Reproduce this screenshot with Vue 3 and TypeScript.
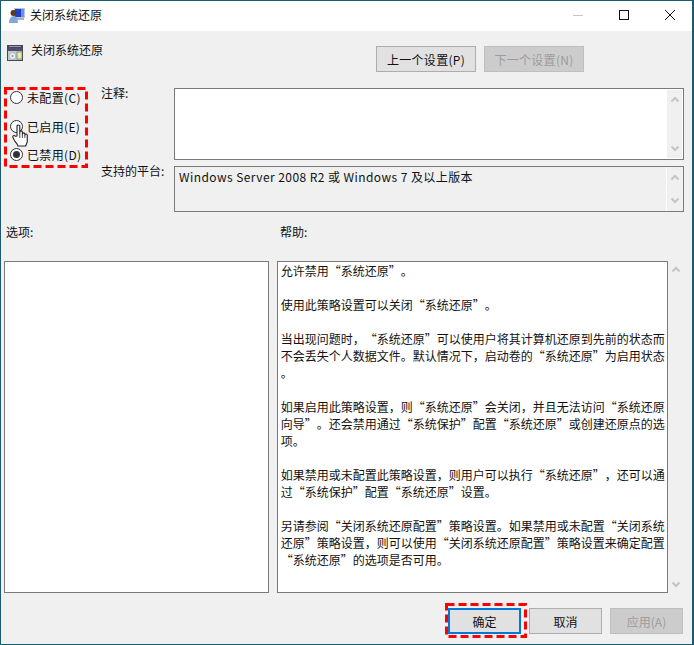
<script setup lang="ts">
const radios = [
  { label: '未配置(C)', checked: false },
  { label: '已启用(E)', checked: false },
  { label: '已禁用(D)', checked: true },
]
const helpLines = [
  '允许禁用“系统还原”。',
  '',
  '使用此策略设置可以关闭“系统还原”。',
  '',
  '当出现问题时，“系统还原”可以使用户将其计算机还原到先前的状态而',
  '不会丢失个人数据文件。默认情况下，启动卷的“系统还原”为启用状态',
  '。',
  '',
  '如果启用此策略设置，则“系统还原”会关闭，并且无法访问“系统还原',
  '向导”。还会禁用通过“系统保护”配置“系统还原”或创建还原点的选',
  '项。',
  '',
  '如果禁用或未配置此策略设置，则用户可以执行“系统还原”，还可以通',
  '过“系统保护”配置“系统还原”设置。',
  '',
  '另请参阅“关闭系统还原配置”策略设置。如果禁用或未配置“关闭系统',
  '还原”策略设置，则可以使用“关闭系统还原配置”策略设置来确定配置',
  '“系统还原”的选项是否可用。',
]
</script>

<template>
  <div class="window" lang="zh-CN">
    <div class="titlebar">
      <svg class="title-icon" width="16" height="16" viewBox="0 0 16 16">
        <rect x="5" y="0" width="11" height="10" fill="#b9c6d2" />
        <rect x="6" y="1" width="9" height="8" fill="#1c3fd0" />
        <rect x="12" y="1" width="3" height="8" fill="#6d8df0" />
        <rect x="8" y="10" width="7" height="2" fill="#a9b4bd" />
        <circle cx="4.500" cy="5" r="3" fill="#5a3c22" />
        <path d="M0 15c0-4 2-7 4.500-7S9 11 9 15z" fill="#7fa9d8" />
      </svg>
      <span class="title-text">关闭系统还原</span>
      <div class="caption">
        <svg width="12" height="12" viewBox="0 0 12 12"><path d="M1 6.500h10" stroke="#c4c4c4" /></svg>
        <svg width="12" height="12" viewBox="0 0 12 12"><rect x="1.500" y="1.500" width="9" height="9" fill="none" stroke="#111" /></svg>
        <svg width="12" height="12" viewBox="0 0 12 12"><path d="M1 1l10 10M11 1L1 11" stroke="#111" /></svg>
      </div>
    </div>

    <div class="body">
      <div class="head">
        <div class="policy">
          <svg class="policy-icon" width="17" height="17" viewBox="0 0 17 17">
            <rect x="0" y="0" width="16" height="16" fill="#3d4b50" />
            <rect x="2" y="1" width="12" height="1" fill="#a98ec0" />
            <rect x="1" y="3" width="14" height="3" fill="#574a72" />
            <rect x="1" y="6" width="14" height="9" fill="#b9d0c4" />
            <circle cx="5.500" cy="11" r="3.200" fill="#f1f1f6" stroke="#9a9ab0" stroke-width=".6" />
            <circle cx="5.500" cy="11" r="1" fill="#8a7ea8" />
            <rect x="10" y="7" width="5" height="7" fill="#efe3b0" stroke="#6a6a52" stroke-width=".6" />
          </svg>
          <span class="policy-text">关闭系统还原</span>
        </div>
        <div class="nav">
          <button class="btn wide" type="button">上一个设置(P)</button>
          <button class="btn wide disabled" type="button">下一个设置(N)</button>
        </div>
      </div>

      <div class="settings">
        <div class="radios">
          <label v-for="r in radios" :key="r.label" class="radio">
            <span class="dot" :class="{ on: r.checked }"></span>
            <span>{{ r.label }}</span>
          </label>
          <svg class="mark mark-radios" width="84" height="81" viewBox="0 0 84 81">
            <rect x="1.500" y="1.500" width="81" height="78" fill="none" stroke="#f00" stroke-width="3" stroke-dasharray="8 4" />
          </svg>
          <svg class="hand" width="18" height="25" viewBox="0 0 18 25">
            <path d="M5 13V3.200C5 1.500 7.800 1.500 7.800 3.200V10.500V9c0-1.500 2.600-1.500 2.600 0v2c0-1.500 2.500-1.500 2.500 0v1c0-1.300 2.400-1.300 2.400.2V18c0 2-1 3-1.600 5H6c-.6-2-2-3-3.500-5.500L1 14.500c-.8-1.700 1.200-2.800 2.300-1.300z" fill="#fff" stroke="#222" stroke-width="1.100" stroke-linejoin="round" />
            <path d="M7.800 11v4M10.400 11v4M12.900 12v3" stroke="#333" stroke-width=".9" fill="none" />
          </svg>
        </div>
        <div class="fields">
          <span class="field-label">注释:</span>
          <div class="box note">
            <div class="box-fill"></div>
            <div class="scroll white-edge">
              <svg width="10" height="7" viewBox="0 0 10 7"><path d="M1.500 5.500L5 2l3.500 3.500" fill="none" stroke="#c4c4c4" stroke-width="2" /></svg>
              <svg width="10" height="7" viewBox="0 0 10 7"><path d="M1.500 1.500L5 5l3.500-3.500" fill="none" stroke="#c4c4c4" stroke-width="2" /></svg>
            </div>
          </div>
          <span class="field-label">支持的平台:</span>
          <div class="box platform">
            <div class="box-fill grey">Windows Server 2008 R2 或 Windows 7 及以上版本</div>
            <div class="scroll">
              <svg width="10" height="7" viewBox="0 0 10 7"><path d="M1.500 5.500L5 2l3.500 3.500" fill="none" stroke="#c4c4c4" stroke-width="2" /></svg>
              <svg width="10" height="7" viewBox="0 0 10 7"><path d="M1.500 1.500L5 5l3.500-3.500" fill="none" stroke="#c4c4c4" stroke-width="2" /></svg>
            </div>
          </div>
        </div>
      </div>

      <div class="pane-labels">
        <span class="col-left">选项:</span>
        <span>帮助:</span>
      </div>

      <div class="panes">
        <div class="pane-left"></div>
        <div class="pane-help">
          <div v-for="(line, i) in helpLines" :key="i" class="help-line">{{ line }}</div>
        </div>
        <div class="help-scroll">
          <svg width="10" height="7" viewBox="0 0 10 7"><path d="M1.500 5.500L5 2l3.500 3.500" fill="none" stroke="#c4c4c4" stroke-width="2" /></svg>
          <svg width="10" height="7" viewBox="0 0 10 7"><path d="M1.500 1.500L5 5l3.500-3.500" fill="none" stroke="#c4c4c4" stroke-width="2" /></svg>
        </div>
      </div>

      <div class="footer">
        <div class="ok-wrap">
          <button class="btn small ok" type="button">确定</button>
          <svg class="mark mark-ok" width="82" height="35" viewBox="0 0 82 35">
            <rect x="1.500" y="1.500" width="79" height="32" fill="none" stroke="#f00" stroke-width="3" stroke-dasharray="8 4" />
          </svg>
        </div>
        <button class="btn small" type="button">取消</button>
        <button class="btn small disabled" type="button">应用(A)</button>
      </div>
    </div>
  </div>
</template>

<style>
html, body { margin: 0; padding: 0; background: #f0f0f0; }
</style>

<style scoped>
.window {
  box-sizing: border-box;
  width: 694px;
  height: 645px;
  border: 1px solid #1c5a70;
  border-right-width: 2px;
  display: flex;
  flex-direction: column;
  background: #f0f0f0;
  color: #111;
  font-family: "Noto Sans CJK SC", "Noto Sans", sans-serif;
  font-size: 12px;
  line-height: 17px;
  text-spacing-trim: space-all;
  overflow: hidden;
}
.titlebar {
  height: 30px;
  flex: none;
  background: #fff;
  display: flex;
  align-items: center;
  padding-left: 8px;
}
.title-icon { margin-right: 5px; margin-top: 0; }
.title-text { margin-top: -3px; }
.caption {
  margin-left: auto;
  display: flex;
  gap: 34px;
  padding-right: 16px;
  margin-top: -2px;
}
.body {
  flex: 1;
  display: flex;
  flex-direction: column;
  padding: 15px 8px 0 3px;
  min-height: 0;
}
.head {
  display: flex;
  justify-content: space-between;
  align-items: flex-start;
  height: 42px;
}
.policy {
  display: flex;
  align-items: flex-start;
  margin-left: 3px;
  line-height: 11px;
}
.policy-icon { margin-right: 7px; margin-top: -1px; }
.policy-text { margin-top: -2px; }
.nav { display: flex; gap: 8px; margin-right: 100px; }
.btn {
  box-sizing: border-box;
  font: inherit;
  color: #111;
  padding: 0;
  background: #e1e1e1;
  border: 1px solid #adadad;
  height: 26px;
  border-radius: 0;
}
.btn.wide { width: 100px; letter-spacing: 0.3px; }
.btn.small { width: 73px; }
.btn.disabled { background: #cccccc; border-color: #bfbfbf; color: #9c9c9c; }
.btn.ok { border: 2px solid #0078d7; }
.settings {
  display: flex;
  height: 124px;
}
.radios {
  position: relative;
  width: 97px;
  flex: none;
  padding: 1px 0 0 6px;
  box-sizing: border-box;
  display: flex;
  flex-direction: column;
  gap: 11.500px;
}
.radio {
  display: flex;
  align-items: center;
  gap: 4px;
  letter-spacing: 0.35px;
}
.dot {
  box-sizing: border-box;
  width: 13px;
  height: 13px;
  border-radius: 50%;
  border: 1px solid #333;
  background: #fff;
  display: flex;
  align-items: center;
  justify-content: center;
  flex: none;
}
.dot.on::after {
  content: "";
  width: 7px;
  height: 7px;
  border-radius: 50%;
  background: #333;
}
.mark {
  position: absolute;
  pointer-events: none;
}
.mark-radios { left: 0; top: -1px; }
.mark-ok { left: -3px; top: -5px; }
.hand { position: absolute; left: 8px; top: 35px; }
.fields {
  flex: 1;
  display: grid;
  grid-template-columns: 73px 510px;
  grid-template-rows: 72px 46px;
  row-gap: 6px;
}
.field-label { line-height: 10px; }
.box {
  box-sizing: border-box;
  border: 1px solid #7a7a7a;
  display: flex;
  background: #fff;
}
.box.platform { background: #f0f0f0; }
.box-fill { flex: 1; padding: 1px 4px; }
.box-fill.grey { letter-spacing: 0.43px; line-height: 20px; padding: 0 4px; }
.scroll {
  width: 17px;
  display: flex;
  flex-direction: column;
  align-items: center;
  justify-content: space-between;
  padding: 7px 0;
  box-sizing: border-box;
  background: #f0f0f0;
  border-left: 1px solid #fff;
}
.white-edge { margin: 1px; width: 16px; padding: 6px 0; }
.pane-labels {
  display: flex;
  height: 35px;
  padding-top: 14px;
  line-height: 12px;
  padding-left: 2px;
}
.col-left { width: 274px; }
.panes {
  display: flex;
  height: 332px;
  flex: none;
}
.pane-left {
  box-sizing: border-box;
  width: 266px;
  border: 1px solid #7a7a7a;
  background: #fff;
  margin-right: 8px;
}
.pane-help {
  box-sizing: border-box;
  width: 393px;
  border: 1px solid #7a7a7a;
  background: #fff;
  padding: 0 0 0 3px;
}
.help-line { height: 17px; white-space: pre; }
.help-scroll {
  width: 16px;
  display: flex;
  flex-direction: column;
  align-items: center;
  justify-content: space-between;
  padding: 5px 0;
  box-sizing: border-box;
}
.footer {
  display: flex;
  justify-content: flex-end;
  gap: 8px;
  padding-top: 15px;
  padding-right: 1px;
}
.ok-wrap { position: relative; display: flex; }
</style>
